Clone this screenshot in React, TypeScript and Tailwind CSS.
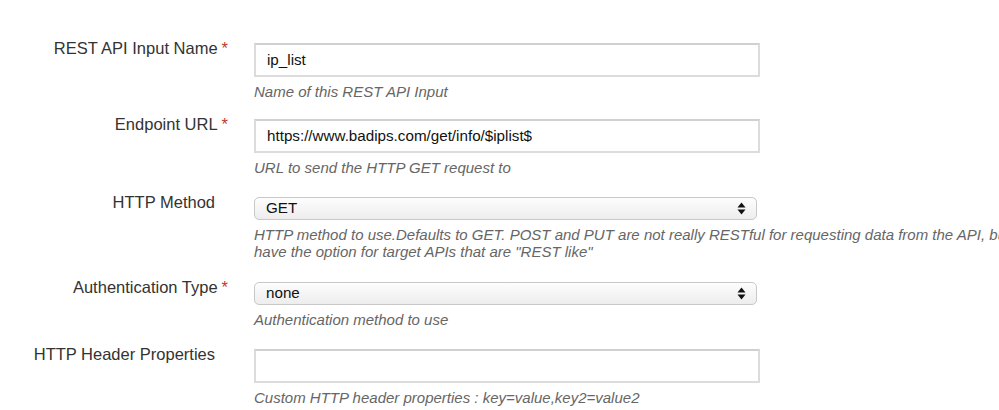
import React from 'react';

const Req = () => <span className="text-[#c0392b] ml-1">*</span>;

const Arrows = () => (
  <svg width="9" height="13" viewBox="0 0 9 13" className="absolute right-[10px] top-[4px]">
    <path d="M4.5 0.5 L8.5 5.5 L0.5 5.5 Z" fill="#111" />
    <path d="M4.5 12.5 L8.5 7.5 L0.5 7.5 Z" fill="#111" />
  </svg>
);

const Row = ({
  label,
  required,
  children,
  help,
  className,
}: {
  label: string;
  required?: boolean;
  children: React.ReactNode;
  help: React.ReactNode;
  className?: string;
}) => (
  <div className={'grid grid-cols-[228px_1fr] gap-x-[26px] ' + (className || '')}>
    <div className="text-right text-[16.5px] leading-5 text-[#333] whitespace-nowrap">
      {label}
      {required ? <Req /> : <span className="inline-block w-[13px]" />}
    </div>
    <div className="pt-[5px]">
      {children}
      <p className="mt-[6px] text-[15px] leading-[17px] italic text-[#666] whitespace-nowrap">
        {help}
      </p>
    </div>
  </div>
);

const TextBox = ({ value }: { value: string }) => (
  <div className="w-[506px] h-[34px] border-2 border-[#dcdcdc] border-t-[#d0d0d0] bg-white px-[11px] flex items-center text-[15.2px] text-[#111]">
    {value}
  </div>
);

const SelectBox = ({ value }: { value: string }) => (
  <div className="relative w-[503px] h-[23px] rounded-[5px] border border-[#c8c8c8] bg-gradient-to-b from-[#fdfdfd] to-[#ededed] pl-[11px] flex items-center text-[15.2px] text-[#111]">
    {value}
    <Arrows />
  </div>
);

const App = () => {
  return (
    <div className="w-[999px] h-[410px] overflow-hidden bg-white font-['Liberation_Sans',Arial,sans-serif]">
      <div className="pt-[38px]">
        <Row label="REST API Input Name" required help="Name of this REST API Input" className="mb-[14px]">
          <TextBox value="ip_list" />
        </Row>
        <Row label="Endpoint URL" required help="URL to send the HTTP GET request to" className="mb-[16px]">
          <TextBox value="https://www.badips.com/get/info/$iplist$" />
        </Row>
        <Row
          label="HTTP Method"
          help={
            <>
              HTTP method to use.Defaults to GET. POST and PUT are not really RESTful for requesting data from the API, but you
              <br />
              have the option for target APIs that are "REST like"
            </>
          }
          className="mb-[17px]"
        >
          <SelectBox value="GET" />
        </Row>
        <Row label="Authentication Type" required help="Authentication method to use" className="mb-[16px]">
          <SelectBox value="none" />
        </Row>
        <Row label="HTTP Header Properties" help="Custom HTTP header properties : key=value,key2=value2">
          <TextBox value="" />
        </Row>
      </div>
    </div>
  );
};

export default App;
